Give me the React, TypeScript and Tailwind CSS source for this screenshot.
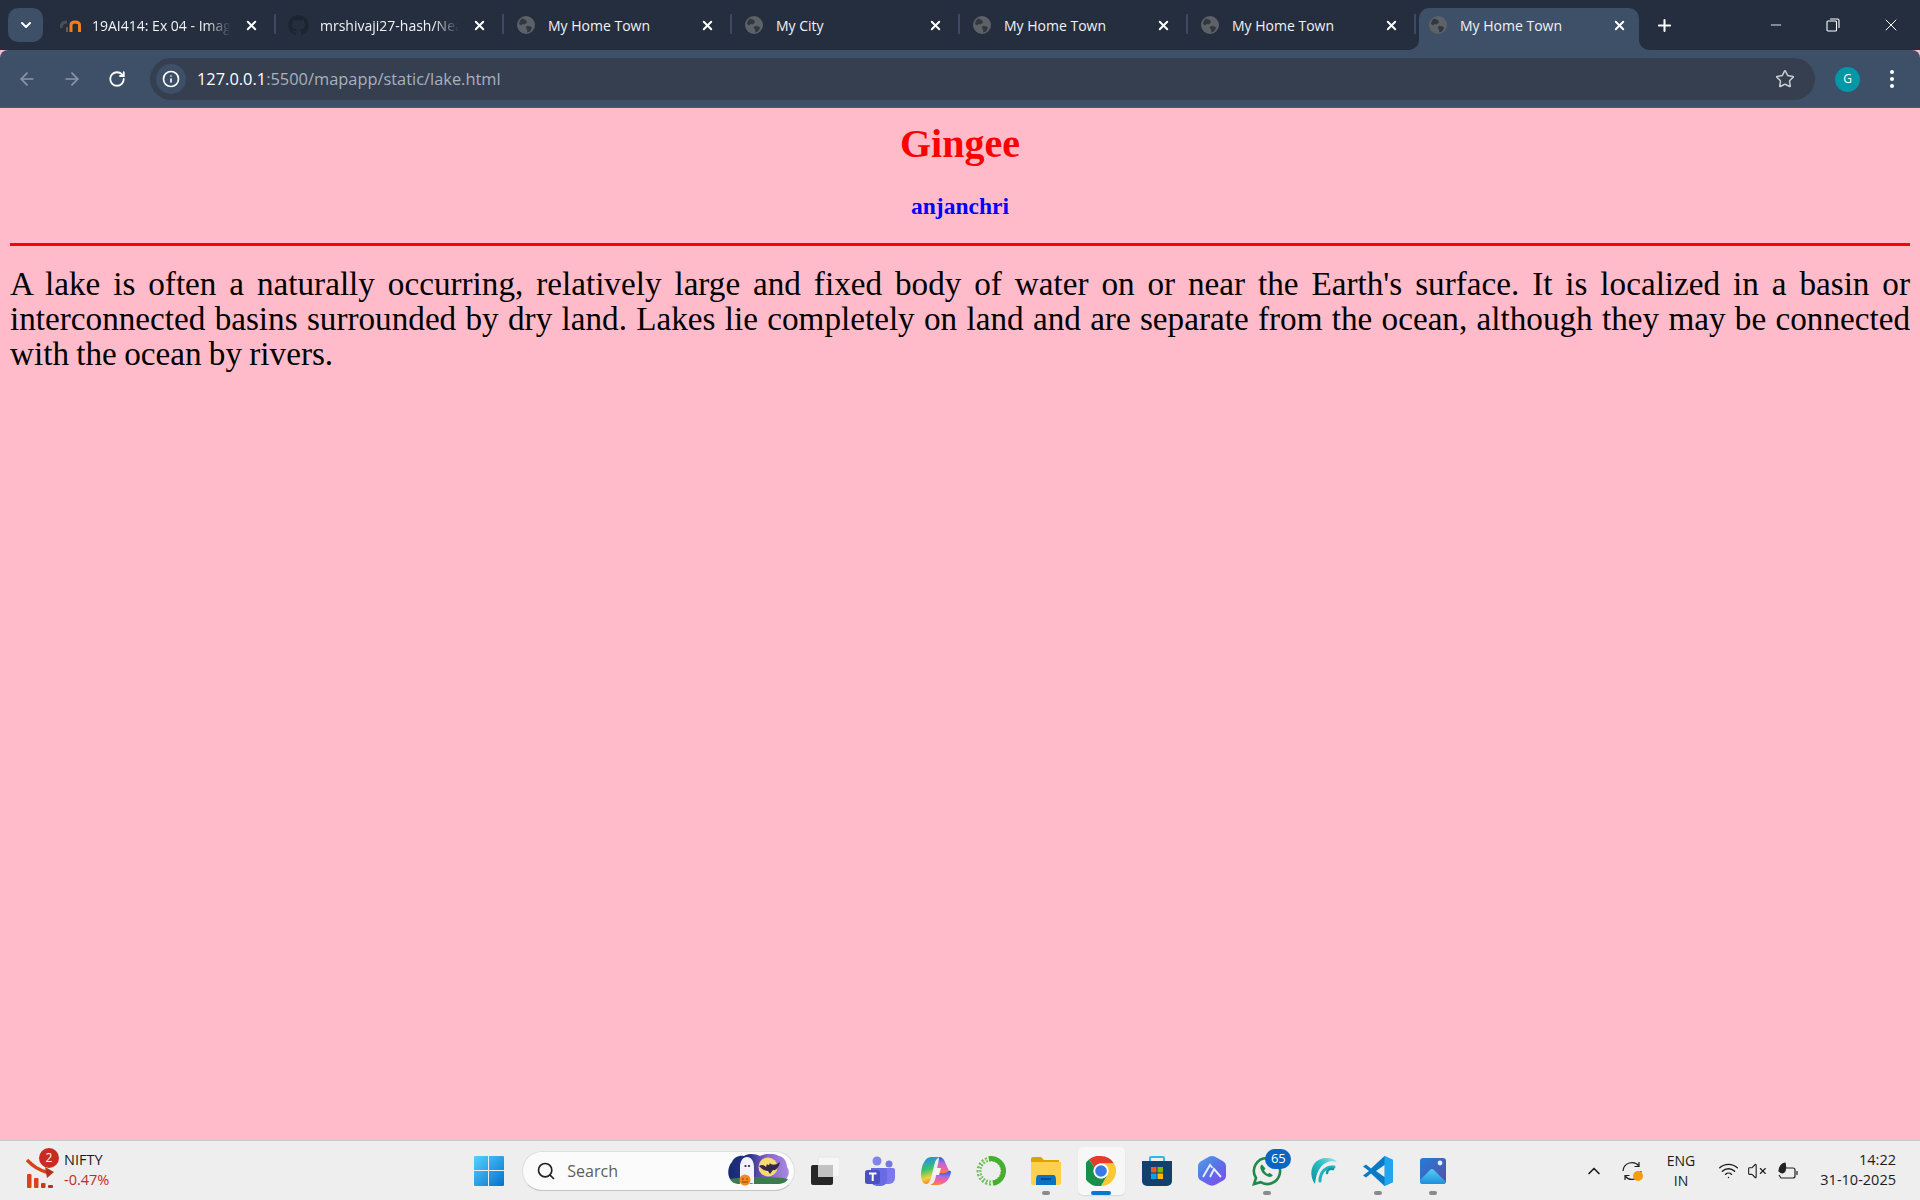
import { X, Plus, ArrowLeft, ArrowRight, RotateCw, Info, Star, ChevronDown, ChevronUp, Search, Minus, Wifi, VolumeX } from "lucide-react";
import { FaGithub } from "react-icons/fa";

const uiFont = "font-['Open_Sans','Noto_Sans',sans-serif]";

function Globe() {
  return (
    <svg width="18" height="18" viewBox="0 0 18 18">
      <circle cx="9" cy="9" r="9" fill="#5d6269" />
      <path d="M5 2.500l4 1.500 1 2.500-2.500 2-2-.5-1.500 1.500L2 8c.3-2.500 1.400-4.300 3-5.500z" fill="#33373f" />
      <path d="M10 10l4 .5 1 1.500-2 3.500-2.500 1-.5-3-1.500-2z" fill="#33373f" />
    </svg>
  );
}

function MoodleIcon() {
  return (
    <svg width="21" height="13" viewBox="0 0 21 13">
      <path d="M1 9c0-4 2-6 6-6" fill="none" stroke="#55565a" strokeWidth="3" opacity="0.800" />
      <path d="M7 13V8" stroke="#6b5a48" strokeWidth="2" />
      <path d="M11 13V6c0-2 1.500-3 4-3s4.500 1 4.500 3v7" fill="none" stroke="#ee7f1e" strokeWidth="3" />
    </svg>
  );
}

function Tab({ title, icon, fade }: { title: string; icon: React.ReactNode; fade?: boolean }) {
  return (
    <div className="relative flex h-[42px] w-[228px] shrink-0 items-center pb-[8px]">
      <span className="flex w-[44px] shrink-0 justify-center">{icon}</span>
      <span
        className={`w-[143px] whitespace-nowrap text-[14px] text-[#f0f2f5] ${fade ? "[mask-image:linear-gradient(90deg,#000_80%,transparent_97%)]" : ""}`}
      >
        {title}
      </span>
      <span className="ml-[8px] flex w-[16px] justify-center">
        <X size={15} strokeWidth={3} className="text-white" />
      </span>
      <span className="absolute right-0 top-[6px] h-[20px] w-[2px] bg-[#3a4a63]" />
    </div>
  );
}

// the active tab flares out into the toolbar at the bottom
function ActiveTab({ title }: { title: string }) {
  return (
    <div className="relative ml-[3px] flex h-[42px] w-[220px] shrink-0 items-center rounded-t-[10px] bg-[#3e4f68] pb-[8px]">
      <svg width="10" height="10" viewBox="0 0 10 10" className="absolute bottom-0 left-[-10px]">
        <path d="M10 0v10H0a10 10 0 0 0 10-10z" fill="#3e4f68" />
      </svg>
      <svg width="10" height="10" viewBox="0 0 10 10" className="absolute bottom-0 right-[-10px]">
        <path d="M0 0v10h10A10 10 0 0 1 0 0z" fill="#3e4f68" />
      </svg>
      <span className="ml-[10px] flex w-[18px] shrink-0 justify-center"><Globe /></span>
      <span className="ml-[13px] w-[151px] whitespace-nowrap text-[14px] text-[#f0f2f5]">{title}</span>
      <span className="flex w-[16px] justify-center">
        <X size={15} strokeWidth={3} className="text-white" />
      </span>
    </div>
  );
}

function TabStrip() {
  return (
    <div className={`flex h-[50px] items-end bg-[#252e3e] ${uiFont}`}>
      <div className="mb-[8px] ml-[8px] mr-[5px] flex h-[34px] w-[35px] items-center justify-center rounded-[10px] bg-[#3e4f68]">
        <ChevronDown size={16} strokeWidth={3} className="text-white" />
      </div>
      <Tab title="19AI414: Ex 04 - Imag" icon={<MoodleIcon />} fade />
      <Tab title="mrshivaji27-hash/Nea" icon={<FaGithub size={21} className="text-[#1d2431]" />} fade />
      <Tab title="My Home Town" icon={<Globe />} />
      <Tab title="My City" icon={<Globe />} />
      <Tab title="My Home Town" icon={<Globe />} />
      <Tab title="My Home Town" icon={<Globe />} />
      <ActiveTab title="My Home Town" />
      <div className="mb-[8px] ml-[10px] flex h-[34px] w-[30px] items-center justify-center">
        <Plus size={19} strokeWidth={2.600} className="text-white" />
      </div>
      <div className="mb-[8px] ml-auto flex h-[34px] items-center text-white">
        <span className="flex w-[56px] justify-center"><Minus size={16} strokeWidth={1.300} /></span>
        <span className="flex w-[58px] justify-center">
          <svg width="14" height="14" viewBox="0 0 14 14" fill="none" stroke="currentColor" strokeWidth="1.100">
            <rect x="1" y="3" width="9.500" height="10" rx="1" />
            <path d="M4 1h7.500a1.500 1.500 0 0 1 1.500 1.500V10" />
          </svg>
        </span>
        <span className="flex w-[58px] justify-center"><X size={20} strokeWidth={1.200} /></span>
      </div>
    </div>
  );
}

function Toolbar() {
  return (
    <div className={`flex h-[58px] items-center rounded-t-[8px] border-b border-[#4a5a74] bg-[#3e4f68] pt-[1px] ${uiFont}`}>
      <div className="flex w-[150px] shrink-0 items-center pl-[17px]">
        <span className="w-[45px]"><ArrowLeft size={20} strokeWidth={2} className="text-[#8d97a6]" /></span>
        <span className="w-[46px]"><ArrowRight size={20} strokeWidth={2} className="text-[#8d97a6]" /></span>
        <RotateCw size={18} strokeWidth={2.400} className="text-white" />
      </div>
      <div className="flex h-[42px] flex-1 items-center rounded-full bg-[#353f50] pl-[6px] pr-[20px]">
        <span className="flex h-[30px] w-[30px] items-center justify-center rounded-full bg-[#3e4f68]">
          <Info size={18} strokeWidth={2.200} className="text-white" />
        </span>
        <span className="ml-[11px] text-[16.400px] text-[#a9b1bd]">
          <span className="text-white">127.0.0.1</span>:5500/mapapp/static/lake.html
        </span>
        <Star size={20} strokeWidth={1.800} className="ml-auto text-[#c8ccd2]" />
      </div>
      <div className="flex w-[105px] shrink-0 items-center">
        <span className="ml-[20px] flex h-[25px] w-[25px] items-center justify-center rounded-full bg-[#0097a7] text-[12px] text-white">G</span>
        <span className="ml-[30px] flex flex-col gap-[3px]">
          <i className="h-[4px] w-[4px] rounded-full bg-white" />
          <i className="h-[4px] w-[4px] rounded-full bg-white" />
          <i className="h-[4px] w-[4px] rounded-full bg-white" />
        </span>
      </div>
    </div>
  );
}

function NiftyChart() {
  return (
    <svg width="30" height="36" viewBox="0 0 30 36">
      <rect x="1" y="20" width="4.500" height="14" rx="1" fill="#d9431a" />
      <rect x="8" y="24" width="4.500" height="10" rx="1" fill="#d9431a" />
      <rect x="15" y="29" width="4.500" height="5" rx="1" fill="#c93a18" />
      <rect x="22" y="31" width="5" height="3" rx="1" fill="#b4321a" />
      <path d="M1 6c6 6 11 10 22 13" fill="none" stroke="#d9431a" strokeWidth="3.500" />
      <path d="M19 13l9 5-7 6" fill="#b4321a" />
    </svg>
  );
}

function Windows() {
  return (
    <svg width="30" height="30" viewBox="0 0 30 30">
      <defs>
        <linearGradient id="win" x1="0" y1="0" x2="1" y2="1">
          <stop offset="0" stopColor="#52d3fb" />
          <stop offset="1" stopColor="#0670cf" />
        </linearGradient>
      </defs>
      <path d="M1 0h13v14H0V1a1 1 0 0 1 1-1zM15 0h14a1 1 0 0 1 1 1v13H15zM0 15h14v15H1a1 1 0 0 1-1-1zM15 15h15v14a1 1 0 0 1-1 1H15z" fill="url(#win)" />
    </svg>
  );
}

function HalloweenArt() {
  return (
    <svg width="62" height="34" viewBox="0 0 62 34">
      <defs>
        <linearGradient id="sky" x1="0" y1="0" x2="1" y2="0">
          <stop offset="0" stopColor="#142a72" />
          <stop offset="0.350" stopColor="#2b3488" />
          <stop offset="0.650" stopColor="#8a62cc" />
          <stop offset="1" stopColor="#a88be0" />
        </linearGradient>
      </defs>
      <path d="M4 8c2-5 7-7 12-6 5-3 12-2 16 0 6-3 14-3 19 0 5 1 8 6 8 11 3 4 2 9-1 12H2C-1 20 0 12 4 8z" fill="url(#sky)" />
      <circle cx="40" cy="13" r="9.500" fill="#f4dc72" />
      <path d="M31 12c3-2 5-1 7 1l1-3 1 1 1 0 1-2c1 2 5 3 10-1-1 5-4 9-7 8l-3 4-2-3c-4 0-6-2-9-5z" fill="#33264f" />
      <path d="M2 25c12-2 45-3 58 0-1 3-6 5-11 5H12c-5 0-9-2-10-5z" fill="#3c7b50" />
      <path d="M12 30V13c0-6 3-10 7-10s7 4 7 10v17l-3-1-2 1-3-1-3 1z" fill="#f4f3fb" />
      <circle cx="17.500" cy="12" r="1.100" fill="#222" />
      <circle cx="21" cy="12" r="1.100" fill="#222" />
      <circle cx="17" cy="26" r="5.500" fill="#f08a1c" />
      <path d="M14 25h2M18 25h2M14 28h6" stroke="#7a3d08" strokeWidth="0.900" />
    </svg>
  );
}

function TaskView() {
  return (
    <svg width="30" height="30" viewBox="0 0 30 30">
      <rect x="8" y="1" width="22" height="20" rx="2" fill="#f6f6f6" stroke="#e6e6e6" />
      <rect x="1" y="9" width="22" height="20" rx="2" fill="#262626" />
      <rect x="8" y="9" width="15" height="12" fill="#c2c2c2" />
    </svg>
  );
}

function Teams() {
  return (
    <svg width="30" height="30" viewBox="0 0 30 30">
      <circle cx="12" cy="5" r="4.500" fill="#7f86e8" />
      <circle cx="24" cy="8" r="3.500" fill="#7479de" />
      <path d="M19 12h9a2 2 0 0 1 2 2v8a6 6 0 0 1-6 6h-5z" fill="#7c78ee" />
      <path d="M6 12h14a2 2 0 0 1 2 2v10a6 6 0 0 1-6 6h-4a6 6 0 0 1-6-6z" fill="#6a6ae6" />
      <rect x="0" y="14" width="15" height="14" rx="2.500" fill="#4a50bf" />
      <path d="M4 17.500h7.500M7.700 17.500V25" stroke="#fff" strokeWidth="2" />
    </svg>
  );
}

function Copilot() {
  return (
    <svg width="30" height="30" viewBox="0 0 30 30">
      <defs>
        <linearGradient id="co1" x1="0.300" y1="0" x2="0.500" y2="1">
          <stop offset="0" stopColor="#1f8fe8" />
          <stop offset="0.450" stopColor="#3cc46a" />
          <stop offset="0.750" stopColor="#f2d13a" />
          <stop offset="1" stopColor="#f47a3c" />
        </linearGradient>
        <linearGradient id="co2" x1="0.600" y1="0" x2="0.500" y2="1">
          <stop offset="0" stopColor="#1466d8" />
          <stop offset="0.400" stopColor="#b06ae0" />
          <stop offset="0.700" stopColor="#f45fa0" />
          <stop offset="1" stopColor="#f8843c" />
        </linearGradient>
      </defs>
      <path d="M10 1h9c-3 1-4.500 3-5.500 7L10 22c-1 4-3 6-5 6-3 0-5-4-5-9C0 10 4 1 10 1z" fill="url(#co1)" />
      <path d="M16 29h-7c3-1 4.500-3 5.500-7l1.500-6 8-1c3 0 6-1 6 1-1 7-6 13-14 13z" fill="url(#co2)" />
      <path d="M18 1c3 0 5 2 6 5l4 9c-2 2-5 2-8 2h-5l2-9c1-4 1-7 1-7z" fill="url(#co2)" />
      <path d="M14 12h6l-2 7h-6z" fill="#f6f2fb" />
    </svg>
  );
}

function RingApp() {
  return (
    <svg width="30" height="30" viewBox="0 0 30 30">
      <circle cx="15" cy="15" r="12" fill="none" stroke="#6cc05a" strokeWidth="5" strokeDasharray="2 1.600" transform="rotate(140 15 15)" pathLength="75.400" />
      <circle cx="15" cy="15" r="12" fill="none" stroke="#eeeeee" strokeWidth="1" strokeDasharray="1.500 1.500" strokeDashoffset="5" transform="rotate(140 15 15)" />
      <path d="M15 0a15 15 0 0 1 15 15 15 15 0 0 1-15 15V25a10 10 0 0 0 0-20z" fill="#46b02e" transform="rotate(-10 15 15)" />
    </svg>
  );
}

function Explorer() {
  return (
    <svg width="30" height="28" viewBox="0 0 30 28">
      <path d="M0 2a2 2 0 0 1 2-2h8l3 3h15v6H0z" fill="#dba200" />
      <path d="M0 5h30v21a2 2 0 0 1-2 2H2a2 2 0 0 1-2-2z" fill="#fdd04f" />
      <path d="M5 24c0-5 1-6 3-6h14c2 0 3 1 3 6v4H5z" fill="#0a72c4" />
      <path d="M10 22h10" stroke="#043d75" strokeWidth="1.500" />
    </svg>
  );
}

function ChromeIcon() {
  return (
    <svg width="30" height="30" viewBox="0 0 30 30">
      <path d="M15 0a15 15 0 0 1 13 7.500H15a7.500 7.500 0 0 0-6.500 3.800L3 3.500A15 15 0 0 1 15 0z" fill="#e33b2e" />
      <path d="M28 7.500A15 15 0 0 1 15 30l6.500-11.200A7.500 7.500 0 0 0 21.500 11.300 7.500 7.500 0 0 0 15 7.500z" fill="#fcc934" />
      <path d="M3 3.500l5.500 7.800a7.500 7.500 0 0 0 6.500 11.200 7.500 7.500 0 0 0 6.500-3.700L15 30A15 15 0 0 1 3 3.500z" fill="#18904a" />
      <circle cx="15" cy="15" r="7.500" fill="#fff" />
      <circle cx="15" cy="15" r="5.800" fill="#3b78e7" />
    </svg>
  );
}

function StoreIcon() {
  return (
    <svg width="30" height="30" viewBox="0 0 30 30">
      <path d="M8 6V2a1 1 0 0 1 1-1h12a1 1 0 0 1 1 1v4" fill="none" stroke="#2fb6ea" strokeWidth="2" />
      <path d="M0 5h30v20a5 5 0 0 1-5 5H5a5 5 0 0 1-5-5z" fill="#13406e" />
      <rect x="9" y="11" width="5.500" height="5.500" fill="#f05a22" />
      <rect x="15.500" y="11" width="5.500" height="5.500" fill="#7db900" />
      <rect x="9" y="17.500" width="5.500" height="5.500" fill="#00a3ee" />
      <rect x="15.500" y="17.500" width="5.500" height="5.500" fill="#ffb900" />
    </svg>
  );
}

function HexApp() {
  return (
    <svg width="30" height="30" viewBox="0 0 30 30">
      <defs>
        <linearGradient id="hex" x1="0" y1="0" x2="0.800" y2="1">
          <stop offset="0" stopColor="#4aa0ea" />
          <stop offset="0.500" stopColor="#5a74e6" />
          <stop offset="1" stopColor="#7b4df0" />
        </linearGradient>
      </defs>
      <path d="M11 1.200a8 8 0 0 1 8 0l7 4a6 6 0 0 1 3 5.200v9a6 6 0 0 1-3 5.200l-7 4a8 8 0 0 1-8 0l-7-4a6 6 0 0 1-3-5.200v-9a6 6 0 0 1 3-5.200z" fill="url(#hex)" />
      <path d="M6 21l7-12 2.500 3M24 21l-7-8-4 8" fill="none" stroke="#e8eeff" strokeWidth="1.900" />
    </svg>
  );
}

function Whatsapp() {
  return (
    <svg width="30" height="30" viewBox="0 0 30 30">
      <path d="M15 2a13 13 0 0 0-11 20l-2 6 6.500-1.800A13 13 0 1 0 15 2z" fill="none" stroke="#1f8a4c" strokeWidth="2.600" />
      <path d="M10 8.500c-1.500 1-2 2.500-1.500 4.300 1 3.700 4.500 7 8 8 1.700.4 3.300 0 4.300-1.500l-3.300-2.600-1.600 1.300c-1.600-.7-3-2.200-3.800-3.800l1.300-1.600z" fill="#1f8a4c" />
    </svg>
  );
}

function WaveApp() {
  return (
    <svg width="30" height="30" viewBox="0 0 30 30" fill="none" strokeLinecap="round">
      <defs>
        <linearGradient id="wav" x1="0" y1="1" x2="1" y2="0">
          <stop offset="0" stopColor="#0b8f98" />
          <stop offset="0.600" stopColor="#2fc0c8" />
          <stop offset="1" stopColor="#a8e8ea" />
        </linearGradient>
      </defs>
      <path d="M7 28C0 18 3 3 18 2c5-.3 9 1 11 4-4-1-8-1-11 1C11 11 8 18 7 28z" fill="url(#wav)" />
      <path d="M11.500 26C9 17 13 8 21 7" stroke="#eeeeee" strokeWidth="1.300" />
      <path d="M12 25c0-9 6-15 14-14" stroke="#1fb2bc" strokeWidth="3" />
      <path d="M19 17c0-3 3-5 6-4" stroke="#1597a3" strokeWidth="2.600" />
    </svg>
  );
}

function VSCode() {
  return (
    <svg width="30" height="30" viewBox="0 0 30 30">
      <path d="M21.500 0L30 4v22l-8.500 4L8 17.500l-5 4L0 19.500 6 15 0 10.500 3 8.500l5 4z" fill="#0a7ac6" />
      <path d="M21.500 0L30 4v22l-8.500 4z" fill="#22a5ee" />
      <path d="M21.500 9v12L13 15z" fill="#eeeeee" />
    </svg>
  );
}

function Photos() {
  return (
    <svg width="28" height="28" viewBox="0 0 28 28">
      <defs>
        <linearGradient id="pho" x1="0" y1="0" x2="1" y2="1">
          <stop offset="0" stopColor="#1f7fd8" />
          <stop offset="1" stopColor="#5f4aa8" />
        </linearGradient>
        <linearGradient id="mtn" x1="0" y1="0" x2="0" y2="1">
          <stop offset="0" stopColor="#55cdf5" />
          <stop offset="1" stopColor="#1d8fdc" />
        </linearGradient>
      </defs>
      <rect width="26" height="26" x="1" y="1" rx="3" fill="url(#pho)" />
      <circle cx="21" cy="6" r="2.400" fill="#e8f0fa" />
      <path d="M1 23l10-10a3 3 0 0 1 4 0l12 12a3 3 0 0 1-3 2H4a3 3 0 0 1-3-3z" fill="url(#mtn)" />
    </svg>
  );
}

function Slot({ children, running, active }: { children: React.ReactNode; running?: boolean; active?: boolean }) {
  return (
    <div className="relative flex h-[60px] w-[55.300px] shrink-0 items-center justify-center">
      {active && <span className="absolute left-[4px] right-[4px] top-[6px] h-[48px] rounded-[5px] bg-[#f7f7f7] shadow-[0_1px_1px_#d8d8d8]" />}
      <span className="relative flex">{children}</span>
      {running && <span className="absolute bottom-[6px] left-1/2 h-[4px] w-[8px] -translate-x-1/2 rounded-full bg-[#8a8a8a]" />}
      {active && <span className="absolute bottom-[6px] left-1/2 h-[4px] w-[20px] -translate-x-1/2 rounded-full bg-[#0078d4]" />}
    </div>
  );
}

function Taskbar() {
  return (
    <div className={`flex h-[60px] items-center border-t border-[#c9c9c9] bg-[#eeeeee] text-[#1c1c1c] ${uiFont}`}>
      <div className="flex w-[461px] shrink-0 items-center pl-[26px]">
        <div className="relative mt-[2px] h-[36px] w-[30px]">
          <NiftyChart />
          <span className="absolute left-[13px] top-[-6px] flex h-[20px] w-[20px] items-center justify-center rounded-full bg-[#c92a22] text-[12px] text-white">2</span>
        </div>
        <div className="mb-[2px] ml-[8px] flex flex-col text-[14.500px] leading-[20px]">
          <span>NIFTY</span>
          <span className="text-[#c42b1c]">-0.47%</span>
        </div>
      </div>
      <Slot><Windows /></Slot>
      <div className="ml-[6px] mr-[2px] flex h-[40px] w-[273px] shrink-0 items-center rounded-full border border-[#dedede] border-b-[#c4c4c4] bg-[#fbfbfb] pl-[13px] pr-[4px]">
        <Search size={20} strokeWidth={2} className="text-[#222]" />
        <span className="ml-[11px] text-[16px] text-[#5d5d5d]">Search</span>
        <span className="ml-auto flex"><HalloweenArt /></span>
      </div>
      <Slot><TaskView /></Slot>
      <Slot><Teams /></Slot>
      <Slot><Copilot /></Slot>
      <Slot><RingApp /></Slot>
      <Slot running><Explorer /></Slot>
      <Slot active><ChromeIcon /></Slot>
      <Slot><StoreIcon /></Slot>
      <Slot><HexApp /></Slot>
      <Slot running>
        <Whatsapp />
        <span className="absolute left-[13px] top-[-7px] flex h-[20px] w-[26px] items-center justify-center rounded-full bg-[#0a66c2] text-[13px] text-white">65</span>
      </Slot>
      <Slot><WaveApp /></Slot>
      <Slot running><VSCode /></Slot>
      <Slot running><Photos /></Slot>
      <div className="ml-auto flex items-center pr-[24px]">
        <ChevronUp size={20} strokeWidth={2} className="mr-[17px]" />
        <div className="relative mr-[18px] h-[22px] w-[22px]">
          <svg width="22" height="22" viewBox="0 0 22 22" fill="none" stroke="#222" strokeWidth="1.200">
            <path d="M2 11a9 9 0 0 1 16-5M18 2v4.500h-4.500M20 11a9 9 0 0 1-16 5M4 20v-4.500h4.500" />
          </svg>
          <span className="absolute bottom-[1px] right-[0px] h-[10px] w-[10px] rounded-full bg-[#f59c0c]" />
        </div>
        <div className="flex w-[40px] flex-col items-center text-[14px] leading-[20px]">
          <span>ENG</span>
          <span>IN</span>
        </div>
        <Wifi size={21} strokeWidth={1.600} className="ml-[17px]" />
        <VolumeX size={20} strokeWidth={1.300} className="ml-[8px]" />
        <svg width="22" height="18" viewBox="0 0 22 18" fill="none" stroke="#222" strokeWidth="1.200" className="ml-[10px]">
          <path d="M5 6H16a2 2 0 0 1 2 2v6a2 2 0 0 1-2 2H4l-2-3M20 9v4" />
          <path d="M2 9c0-4 3-8 6-8 1 3 1 5 0 8-1 2-4 3-6 0z" fill="#222" />
        </svg>
        <div className="mb-[2px] ml-[19px] flex w-[78px] flex-col items-end text-[14.500px] leading-[20px]">
          <span>14:22</span>
          <span className="whitespace-nowrap">31-10-2025</span>
        </div>
      </div>
    </div>
  );
}

export default function App() {
  return (
    <div className="flex h-[1200px] w-[1920px] flex-col overflow-hidden bg-[#ffbbc9]">
      <TabStrip />
      <Toolbar />
      <main className="flex-1 px-[10px] pt-[13px] font-['Liberation_Serif',serif]">
        <h1 className="text-center text-[40px] font-bold leading-[46px] text-[#ff0000]">Gingee</h1>
        <h2 className="mt-[25px] text-center text-[23.500px] font-bold leading-[28px] text-[#0000ff]">anjanchri</h2>
        <hr className="mt-[23px] h-[3px] border-0 bg-[#ff0000]" />
        <p className="mt-[20px] text-justify text-[33.200px] leading-[35px] text-black [word-spacing:-1px]">
          A lake is often a naturally occurring, relatively large and fixed body of water on or near the Earth's surface. It is localized in a basin or interconnected basins surrounded by dry land. Lakes lie completely on land and are separate from the ocean, although they may be connected with the ocean by rivers.
        </p>
      </main>
      <Taskbar />
    </div>
  );
}
